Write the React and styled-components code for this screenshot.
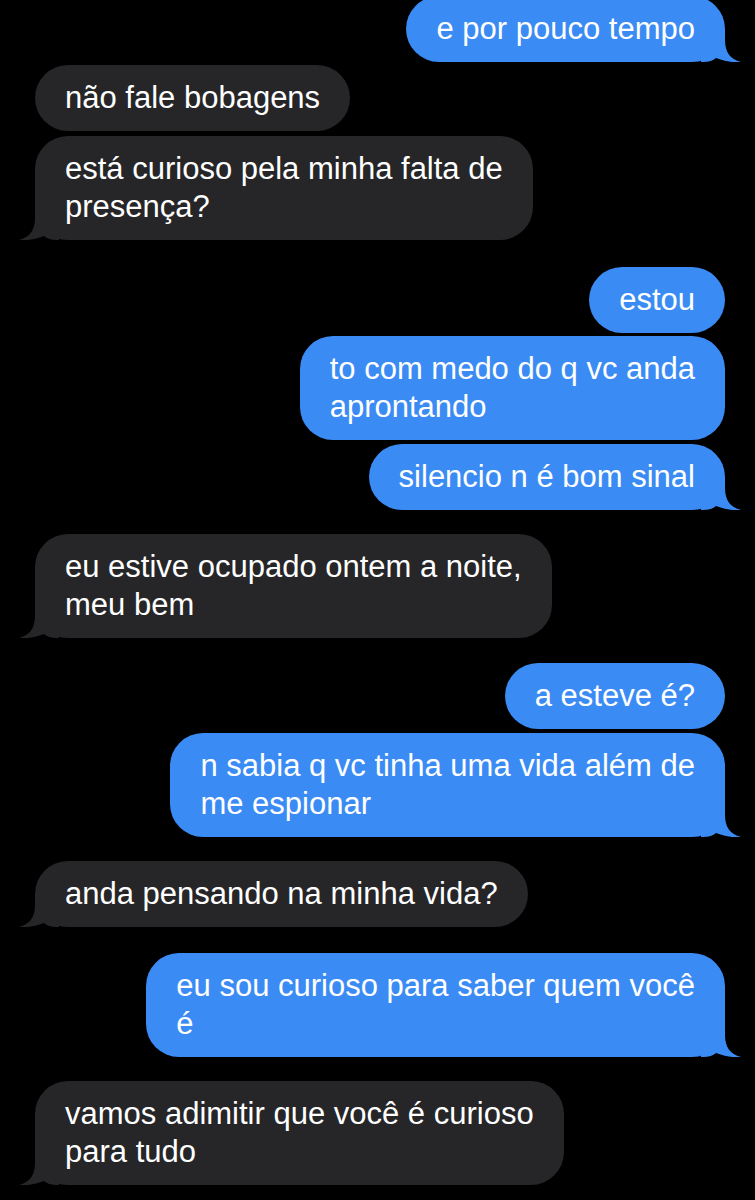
import React from "react";
import styled, { createGlobalStyle } from "styled-components";

const Global = createGlobalStyle`
  html, body { margin: 0; padding: 0; background: #000; }
  body { font-family: "Liberation Sans", Arial, Helvetica, sans-serif; }
`;

const Page = styled.div`
  width: 755px;
  height: 1200px;
  overflow: hidden;
  background: #000;
`;

const Thread = styled.div`
  display: flex;
  flex-direction: column;
  padding: 0 30px 0 35px;
  margin-top: -4px;
`;

const Row = styled.div`
  display: flex;
  justify-content: ${(p) => (p.$me ? "flex-end" : "flex-start")};
  margin-top: ${(p) => p.$gap}px;
`;

const Bubble = styled.div`
  position: relative;
  background: ${(p) => (p.$me ? "#3b8bf4" : "#262628")};
  color: #fff;
  font-size: 31px;
  line-height: 38px;
  padding: 14px 30px;
  border-radius: 33px;
  white-space: nowrap;
`;

const Tail = styled.svg`
  position: absolute;
  bottom: 0;
  width: 40px;
  height: 34px;
  ${(p) => (p.$me ? "right: -16px;" : "left: -16px; transform: scaleX(-1);")}
  fill: ${(p) => (p.$me ? "#3b8bf4" : "#262628")};
`;

const messages = [
  { me: true, gap: 0, tail: true, lines: ["e por pouco tempo"] },
  { me: false, gap: 3, tail: false, lines: ["não fale bobagens"] },
  { me: false, gap: 5, tail: true, lines: ["está curioso pela minha falta de", "presença?"] },
  { me: true, gap: 27, tail: false, lines: ["estou"] },
  { me: true, gap: 3, tail: false, lines: ["to com medo do q vc anda", "aprontando"] },
  { me: true, gap: 4, tail: true, lines: ["silencio n é bom sinal"] },
  { me: false, gap: 24, tail: true, lines: ["eu estive ocupado ontem a noite,", "meu bem"] },
  { me: true, gap: 25, tail: false, lines: ["a esteve é?"] },
  { me: true, gap: 4, tail: true, lines: ["n sabia q vc tinha uma vida além de", "me espionar"] },
  { me: false, gap: 24, tail: true, lines: ["anda pensando na minha vida?"] },
  { me: true, gap: 26, tail: true, lines: ["eu sou curioso para saber quem você", "é"] },
  { me: false, gap: 24, tail: true, lines: ["vamos adimitir que você é curioso", "para tudo"] },
];

function Message({ me, gap, tail, lines }) {
  return (
    <Row $me={me} $gap={gap}>
      <Bubble $me={me}>
        {lines.map((l, i) => (
          <React.Fragment key={i}>
            {i > 0 && <br />}
            {l}
          </React.Fragment>
        ))}
        {tail && (
          <Tail $me={me} viewBox="0 0 40 34">
            <path d="M0 0 H24 V12 C24 24 29 31 40 34 C33 34.8 25 33.5 15 30 C12 32.5 8 34 2 34 H0 Z" />
          </Tail>
        )}
      </Bubble>
    </Row>
  );
}

export default function App() {
  return (
    <Page>
      <Global />
      <Thread>
        {messages.map((m, i) => (
          <Message key={i} {...m} />
        ))}
      </Thread>
    </Page>
  );
}
